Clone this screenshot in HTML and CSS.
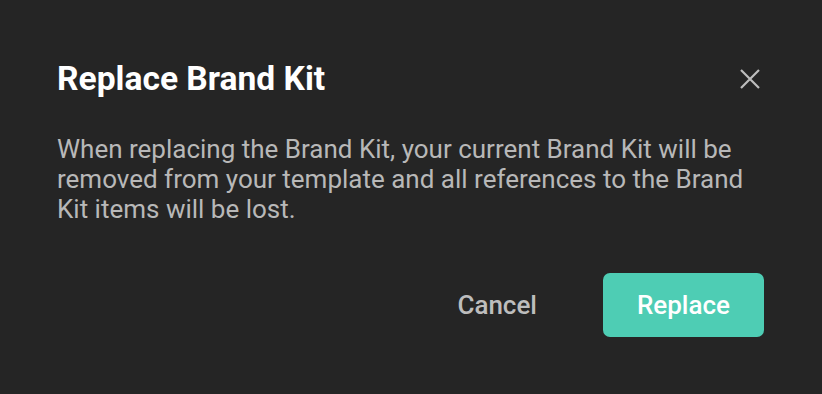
FILE: index.html
```html
<!DOCTYPE html>
<html>
<head>
<meta charset="utf-8">
<link rel="stylesheet" href="styles.css">
</head>
<body>
<div class="dialog">
  <div class="header">
    <h1 class="title">Replace Brand Kit</h1>
    <button class="close" aria-label="Close">
      <svg width="20" height="20" viewBox="0 0 20 20"><path d="M1 1L19 19M19 1L1 19" stroke="#bdbdbd" stroke-width="2.2"/></svg>
    </button>
  </div>
  <p class="message">When replacing the Brand Kit, your current Brand Kit will be removed from your template and all references to the Brand Kit items will be lost.</p>
  <div class="actions">
    <button class="btn cancel">Cancel</button>
    <button class="btn primary">Replace</button>
  </div>
</div>
</body>
</html>
```
FILE: styles.css
```css
html, body {
  margin: 0;
  padding: 0;
  background: #252525;
  width: 822px;
  height: 394px;
  overflow: hidden;
}
.dialog {
  font-family: Roboto, "Liberation Sans", sans-serif;
  padding: 59px 58px 0 57px;
  box-sizing: border-box;
}
.header {
  display: flex;
  justify-content: space-between;
  align-items: center;
  height: 40px;
}
.title {
  margin: 0;
  font-size: 33.6px;
  font-weight: 700;
  color: #ffffff;
  line-height: 40px;
}
.close {
  background: none;
  border: 0;
  padding: 0;
  margin-right: 4px;
  width: 20px;
  height: 20px;
  display: flex;
}
.message {
  margin: 35px 0 0 0;
  font-size: 26px;
  line-height: 30px;
  color: #b8b8b8;
}
.actions {
  display: flex;
  justify-content: flex-end;
  align-items: center;
  gap: 66px;
  margin-top: 49px;
}
.btn {
  font-family: Roboto, "Liberation Sans", sans-serif;
  font-size: 26px;
  font-weight: 500;
  border: 0;
  cursor: pointer;
}
.cancel {
  background: none;
  color: #bdbdbd;
  padding: 0;
}
.primary {
  background: #4ecdb4;
  color: #ffffff;
  width: 161px;
  height: 64px;
  border-radius: 7px;
}
```
